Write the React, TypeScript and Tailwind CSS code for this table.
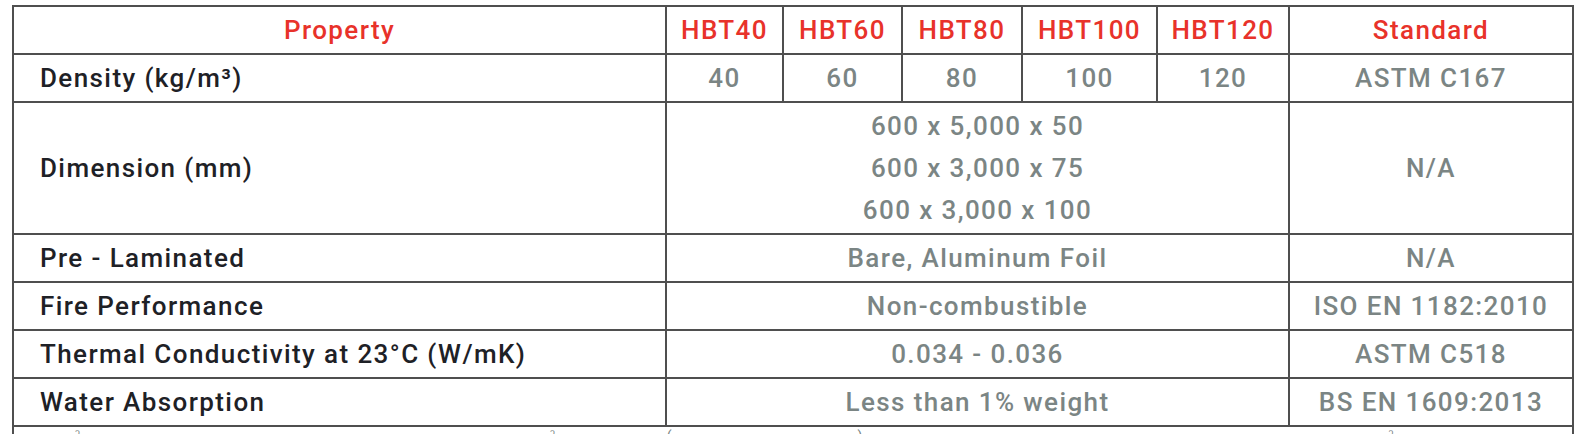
const headers = ["HBT40", "HBT60", "HBT80", "HBT100", "HBT120"];

const rows = [
  { label: "Pre - Laminated", value: "Bare, Aluminum Foil", std: "N/A" },
  { label: "Fire Performance", value: "Non-combustible", std: "ISO EN 1182:2010" },
  { label: "Thermal Conductivity at 23°C (W/mK)", value: "0.034 - 0.036", std: "ASTM C518" },
  { label: "Water Absorption", value: "Less than 1% weight", std: "BS EN 1609:2013" },
];

const cell = "border-2 border-[#4f4f4f] text-center align-middle";
const label = "border-2 border-[#4f4f4f] pl-[26px] text-left align-middle text-[#1e2126]";
const val = "text-[#7b8584]";

export default function App() {
  return (
    <div className="h-[434px] w-[1576px] overflow-hidden bg-white pl-[12px] pt-[5px] font-['Roboto',sans-serif] text-[26px] font-medium leading-none tracking-[1.4px]">
      <table className="w-[1560px] table-fixed border-collapse">
        <colgroup>
          <col className="w-[653px]" />
          <col className="w-[117px]" />
          <col className="w-[119px]" />
          <col className="w-[120px]" />
          <col className="w-[135px]" />
          <col className="w-[132px]" />
          <col className="w-[284px]" />
        </colgroup>
        <tbody>
          <tr className="h-[48px] text-[#e8322a]">
            <td className={cell}>Property</td>
            {headers.map((h) => (
              <td key={h} className={cell}>
                {h}
              </td>
            ))}
            <td className={cell}>Standard</td>
          </tr>
          <tr className="h-[48px]">
            <td className={label}>Density (kg/m³)</td>
            {["40", "60", "80", "100", "120"].map((v) => (
              <td key={v} className={`${cell} ${val}`}>
                {v}
              </td>
            ))}
            <td className={`${cell} ${val}`}>ASTM C167</td>
          </tr>
          <tr className="h-[132px]">
            <td className={label}>Dimension (mm)</td>
            <td colSpan={5} className={`${cell} ${val}`}>
              <div className="flex flex-col items-center leading-[42px]">
                <span>600 x 5,000 x 50</span>
                <span>600 x 3,000 x 75</span>
                <span>600 x 3,000 x 100</span>
              </div>
            </td>
            <td className={`${cell} ${val}`}>N/A</td>
          </tr>
          {rows.map((r) => (
            <tr key={r.label} className="h-[48px]">
              <td className={label}>{r.label}</td>
              <td colSpan={5} className={`${cell} ${val}`}>
                {r.value}
              </td>
              <td className={`${cell} ${val}`}>{r.std}</td>
            </tr>
          ))}
          <tr className="h-[40px]">
            <td colSpan={7} className="border-2 border-[#4f4f4f] align-top">
              <div className="flex pt-[2px] text-[14px] font-normal leading-none tracking-normal text-[#7b8584]">
                <span className="ml-[61px]">ˀ</span>
                <span className="ml-[470px]">ˀ</span>
                <span className="ml-[112px]">(</span>
                <span className="ml-[186px]">)</span>
                <span className="ml-[526px]">ˀ</span>
              </div>
            </td>
          </tr>
        </tbody>
      </table>
    </div>
  );
}
